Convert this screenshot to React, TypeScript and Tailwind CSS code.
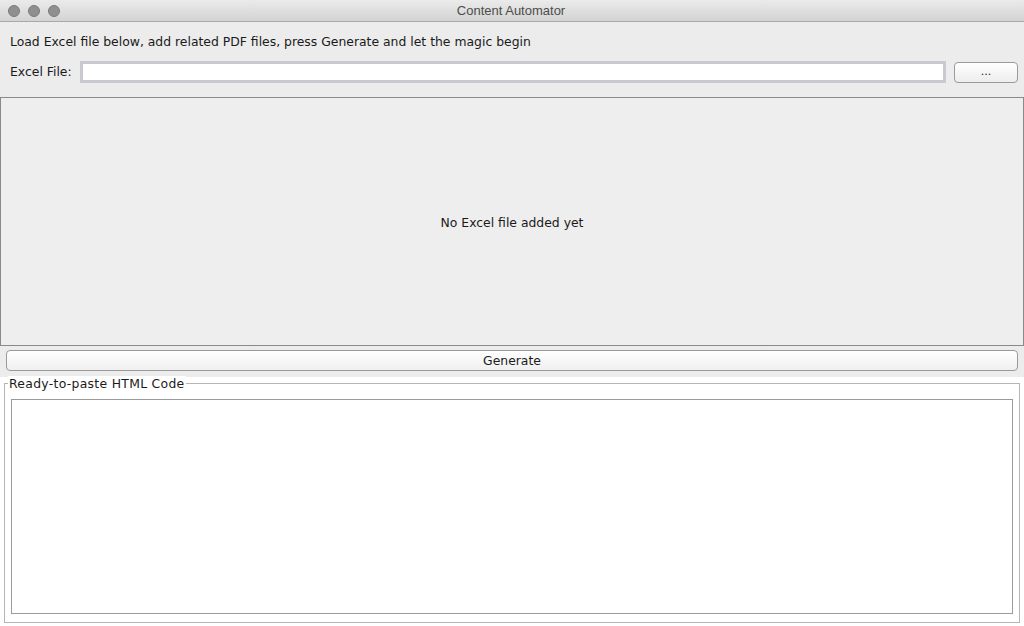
export default function App() {
  const font = { fontFamily: '"Lucida Grande", "DejaVu Sans", "Liberation Sans", sans-serif' };

  return (
    <div className="w-[1024px] h-[626px] flex flex-col bg-[#ececec] text-[12.4px] text-[#1a1a1a] overflow-hidden" style={font}>
      {/* title bar */}
      <div className="h-[22px] flex items-center relative bg-gradient-to-b from-[#ebebeb] to-[#d3d3d3] border-b border-[#a9a9a9]">
        <div className="flex gap-2 pl-[8px]">
          <span className="w-[12px] h-[12px] rounded-full bg-[#8f8f8f] border border-[#7a7a7a]" />
          <span className="w-[12px] h-[12px] rounded-full bg-[#8f8f8f] border border-[#7a7a7a]" />
          <span className="w-[12px] h-[12px] rounded-full bg-[#8f8f8f] border border-[#7a7a7a]" />
        </div>
        <div className="absolute inset-0 flex items-center justify-center pr-[2px] text-[13px] text-[#4d4d4d] font-['Liberation_Sans',sans-serif]">
          Content Automator
        </div>
      </div>

      {/* header */}
      <div className="px-[10px] pt-[10px] h-[29px] leading-[19px]">
        Load Excel file below, add related PDF files, press Generate and let the magic begin
      </div>
      <div className="flex items-center h-[22px] mt-[10px] pl-[10px] pr-[6px]">
        <span className="mr-[8px]">Excel File:</span>
        <div className="flex-1 h-[22px] border-[3px] border-[#c9c9cf] bg-white" />
        <button className="ml-[8px] w-[64px] h-[21px] rounded-[4px] border border-[#9a9a9a] bg-gradient-to-b from-white to-[#ededed] text-[11px] leading-none pb-[2px]">
          ...
        </button>
      </div>

      {/* main panel */}
      <div className="mt-[14px] h-[249px] border border-[#8a8a8a] bg-[#eeeeee] flex items-center justify-center pt-[3px]">
        No Excel file added yet
      </div>

      {/* generate */}
      <div className="px-[6px] pt-[4px] pb-[6px] bg-[#ececec]">
        <button className="w-full h-[21px] rounded-[4px] border border-[#9a9a9a] bg-gradient-to-b from-white to-[#efefef] leading-none pt-[1px]">
          Generate
        </button>
      </div>

      {/* output group */}
      <div className="flex-1 bg-white px-[4px] pt-[6px] pb-[3px]">
        <div className="relative h-full border border-[#b5b5b5] pt-[15px] pl-[6px] pr-[6px] pb-[8px]">
          <span className="absolute -top-[8px] left-[3px] bg-white px-[1px] leading-[16px] tracking-[0.3px]">
            Ready-to-paste HTML Code
          </span>
          <div className="h-full border border-[#9a9a9a] bg-white" />
        </div>
      </div>
    </div>
  );
}
